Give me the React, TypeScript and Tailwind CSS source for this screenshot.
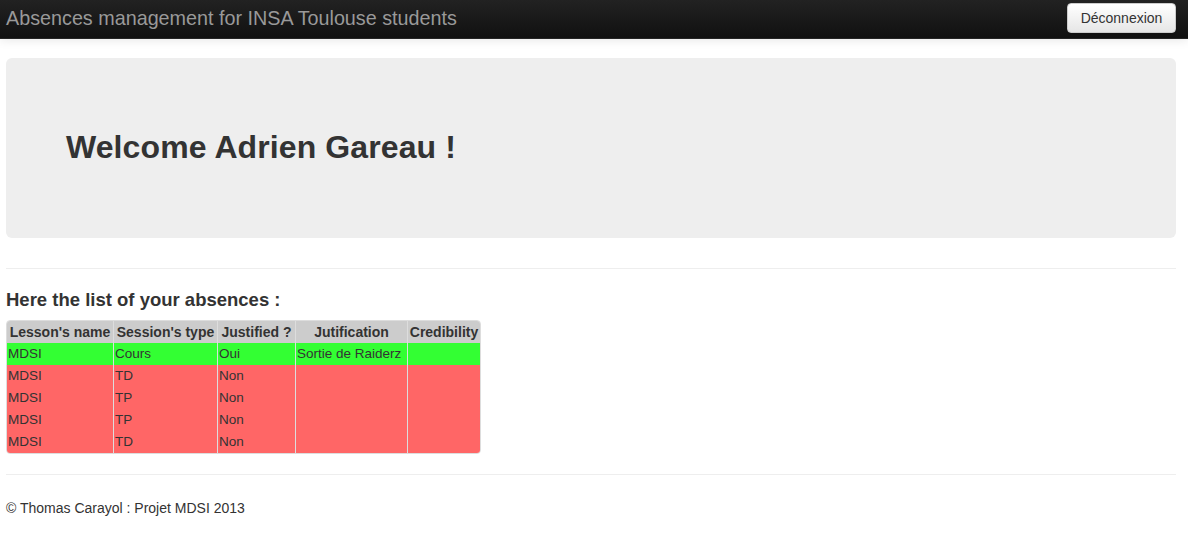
import React from "react";

const rows = [
  { lesson: "MDSI", type: "Cours", justified: "Oui", why: "Sortie de Raiderz", cred: "", ok: true },
  { lesson: "MDSI", type: "TD", justified: "Non", why: "", cred: "", ok: false },
  { lesson: "MDSI", type: "TP", justified: "Non", why: "", cred: "", ok: false },
  { lesson: "MDSI", type: "TP", justified: "Non", why: "", cred: "", ok: false },
  { lesson: "MDSI", type: "TD", justified: "Non", why: "", cred: "", ok: false },
];

const cols = ["w-[106px]", "w-[104px]", "w-[78px]", "w-[112px]", "w-[73px]"];

export default function App() {
  return (
    <div className="min-h-[559px] bg-white text-[#333] font-['Liberation_Sans',Arial,sans-serif] text-[14px]">
      {/* Navbar */}
      <header className="h-[39px] bg-gradient-to-b from-[#222] to-[#111] border-b border-[#252525] shadow-[0_1px_10px_rgba(0,0,0,0.1)] flex items-center justify-between pl-[6px] pr-[12px]">
        <span className="text-[19.75px] text-[#999] leading-[20px] -mt-[2px]">
          Absences management for INSA Toulouse students
        </span>
        <button className="h-[30px] w-[109px] -mt-[2px] rounded-[4px] border border-[#ccc] bg-gradient-to-b from-white to-[#e6e6e6] text-[14px] text-[#333] shadow-[inset_0_1px_0_rgba(255,255,255,0.2),0_1px_2px_rgba(0,0,0,0.05)]">
          Déconnexion
        </button>
      </header>

      <main className="pl-[6px] pr-[12px] pt-[19px]">
        {/* Hero */}
        <div className="h-[180px] rounded-[6px] bg-[#eee] flex items-center pl-[60px]">
          <h2 className="text-[32px] font-bold leading-[40px] text-[#333] -mt-[2px] tracking-[0.1px]">Welcome Adrien Gareau !</h2>
        </div>

        <hr className="mt-[30px] border-0 border-t border-[#eee] border-b border-b-white" />

        <h4 className="mt-[20px] text-[18.5px] font-bold leading-[20px]">Here the list of your absences :</h4>

        <table className="mt-[10px] border-separate border-spacing-0 border border-[#ddd] rounded-[4px] overflow-hidden text-[13px]">
          <thead>
            <tr className="bg-[#ccc] h-[22px]">
              {["Lesson's name", "Session's type", "Justified ?", "Jutification", "Credibility"].map((h, i) => (
                <th
                  key={h}
                  className={`${cols[i]} p-0 text-center font-bold text-[14px] leading-[21px] whitespace-nowrap text-[#333] ${i > 0 ? "border-l border-[#ddd]" : ""}`}
                >
                  {h}
                </th>
              ))}
            </tr>
          </thead>
          <tbody>
            {rows.map((r, ri) => (
              <tr key={ri} className={`h-[22px] ${r.ok ? "bg-[#33ff33]" : "bg-[#ff6666]"}`}>
                {[r.lesson, r.type, r.justified, r.why, r.cred].map((c, i) => (
                  <td
                    key={i}
                    className={`p-0 pl-[1px] text-[13.5px] leading-[22px] whitespace-nowrap text-[#333] ${i > 0 ? "border-l border-[#ddd]" : ""}`}
                  >
                    {c}
                  </td>
                ))}
              </tr>
            ))}
          </tbody>
        </table>

        <hr className="mt-[20px] border-0 border-t border-[#eee] border-b border-b-white" />

        <footer className="pt-[22px]">
          <p className="text-[14px] leading-[20px] text-[#333]">© Thomas Carayol : Projet MDSI 2013</p>
        </footer>
      </main>
    </div>
  );
}
